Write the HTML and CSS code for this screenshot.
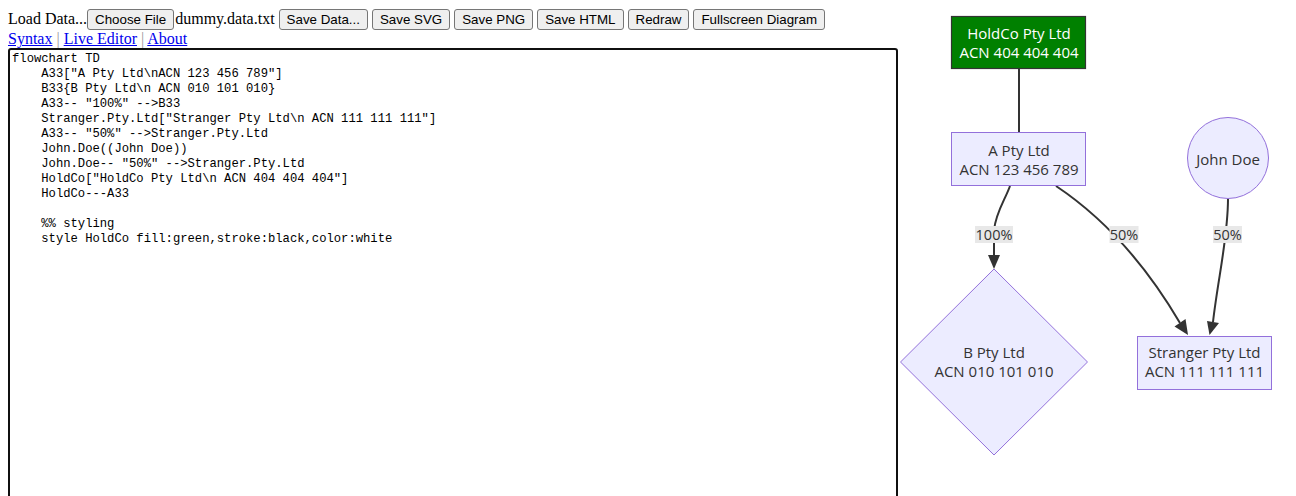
FILE: index.html
```html
<!DOCTYPE html>
<html>
<head>
<meta charset="utf-8">
<title>Diagram Editor</title>
<link rel="stylesheet" href="styles.css">
</head>
<body>
<div class="page">
  <div class="left">
    <div class="toolbar">Load Data...<button class="btn file-btn">Choose File</button><span class="filename">dummy.data.txt</span> <button class="btn">Save Data...</button> <button class="btn">Save SVG</button> <button class="btn">Save PNG</button> <button class="btn">Save HTML</button> <button class="btn">Redraw</button> <button class="btn">Fullscreen Diagram</button></div>
    <div class="links"><a href="#">Syntax</a> <span class="sep">|</span> <a href="#">Live Editor</a> <span class="sep">|</span> <a href="#">About</a></div>
    <textarea class="editor" spellcheck="false">flowchart TD
    A33["A Pty Ltd\nACN 123 456 789"]
    B33{B Pty Ltd\n ACN 010 101 010}
    A33-- "100%" -->B33
    Stranger.Pty.Ltd["Stranger Pty Ltd\n ACN 111 111 111"]
    A33-- "50%" -->Stranger.Pty.Ltd
    John.Doe((John Doe))
    John.Doe-- "50%" -->Stranger.Pty.Ltd
    HoldCo["HoldCo Pty Ltd\n ACN 404 404 404"]
    HoldCo---A33

    %% styling
    style HoldCo fill:green,stroke:black,color:white</textarea>
  </div>
  <div class="diagram">
    <svg class="chart" width="390" height="480" viewBox="0 0 390 480" xmlns="http://www.w3.org/2000/svg">
      <!-- edges -->
      <path class="edge" d="M121,61 L121,124"/>
      <path class="edge" d="M112,178 C107,192 98,204 96,222 L96,248"/>
      <polygon class="arrow" points="90,247 102,247 96,261"/>
      <path class="edge" d="M158,178 C197,204 242,247 282,315"/>
      <polygon class="arrow" points="287.5,311 276.5,318.5 290,327"/>
      <path class="edge" d="M330,191 C330,230 320,270 315,314"/>
      <polygon class="arrow" points="321,315 309,313 311.5,327"/>

      <!-- edge labels -->
      <rect class="lbl-bg" x="77" y="218" width="38" height="17"/>
      <text class="lbl" x="96" y="226.5">100%</text>
      <rect class="lbl-bg" x="211.5" y="218" width="29" height="17"/>
      <text class="lbl" x="226" y="226.5">50%</text>
      <rect class="lbl-bg" x="315" y="218" width="29" height="17"/>
      <text class="lbl" x="329.5" y="226.5">50%</text>

      <!-- nodes -->
      <rect class="hold" x="53.5" y="8.5" width="134" height="52"/>
      <text class="txt white" x="121" y="25">HoldCo Pty Ltd</text>
      <text class="txt white" x="121" y="44">ACN 404 404 404</text>

      <rect class="node" x="53.5" y="124.5" width="134" height="53"/>
      <text class="txt" x="121" y="142">A Pty Ltd</text>
      <text class="txt" x="121" y="161">ACN 123 456 789</text>

      <circle class="node" cx="330" cy="150" r="40.5"/>
      <text class="txt" x="330" y="151">John Doe</text>

      <polygon class="node" points="96,261 189.5,354 96,447 2.5,354"/>
      <text class="txt" x="96" y="344">B Pty Ltd</text>
      <text class="txt" x="96" y="363">ACN 010 101 010</text>

      <rect class="node" x="239.5" y="328.5" width="134" height="53"/>
      <text class="txt" x="306.5" y="344">Stranger Pty Ltd</text>
      <text class="txt" x="306.5" y="363">ACN 111 111 111</text>
    </svg>
  </div>
</div>
</body>
</html>
```
FILE: styles.css
```css
html, body {
  margin: 0;
  padding: 0;
  background: #fff;
}
body {
  padding: 8px;
  font-family: "Liberation Serif", "Times New Roman", serif;
  font-size: 16px;
  color: #000;
  overflow: hidden;
}
.page {
  display: flex;
  align-items: flex-start;
}
.left {
  width: 890px;
  flex: none;
}
.toolbar {
  white-space: nowrap;
  height: 22px;
  line-height: 21px;
}
.btn {
  font-family: "Liberation Sans", Arial, sans-serif;
  font-size: 13.333px;
  color: #000;
  background: #efefef;
  border: 1px solid #767676;
  border-radius: 3px;
  height: 21px;
  padding: 0 7px;
  margin: 0;
  vertical-align: baseline;
  box-sizing: border-box;
}
.file-btn {
  margin-right: 1px;
}
.links {
  height: 18px;
  line-height: 18px;
}
.links a {
  color: #0000ee;
  text-decoration: underline;
}
.sep {
  color: #999;
}
.editor {
  display: block;
  box-sizing: border-box;
  width: 890px;
  height: 460px;
  margin: 0;
  padding: 2px 2px 1px;
  border: 2px solid #101010;
  border-radius: 3px;
  outline: none;
  resize: none;
  font-family: "Liberation Mono", "DejaVu Sans Mono", monospace;
  font-size: 12.2px;
  line-height: 15px;
  color: #000;
  background: #fff;
  white-space: pre;
  overflow: hidden;
}
.diagram {
  flex: none;
  width: 390px;
}
.chart {
  display: block;
}
.edge {
  fill: none;
  stroke: #333;
  stroke-width: 2;
}
.arrow {
  fill: #333;
}
.lbl-bg {
  fill: #e8e8e8;
}
.lbl {
  font-family: "Open Sans", "Liberation Sans", sans-serif;
  font-size: 14.5px;
  fill: #333;
  text-anchor: middle;
  dominant-baseline: central;
}
.node {
  fill: #ececff;
  stroke: #9370db;
  stroke-width: 1;
}
.hold {
  fill: #008000;
  stroke: #333;
  stroke-width: 1.2;
}
.txt {
  font-family: "Open Sans", "Liberation Sans", sans-serif;
  font-size: 15px;
  fill: #333;
  text-anchor: middle;
  dominant-baseline: central;
}
.txt.white {
  fill: #fff;
}
```
